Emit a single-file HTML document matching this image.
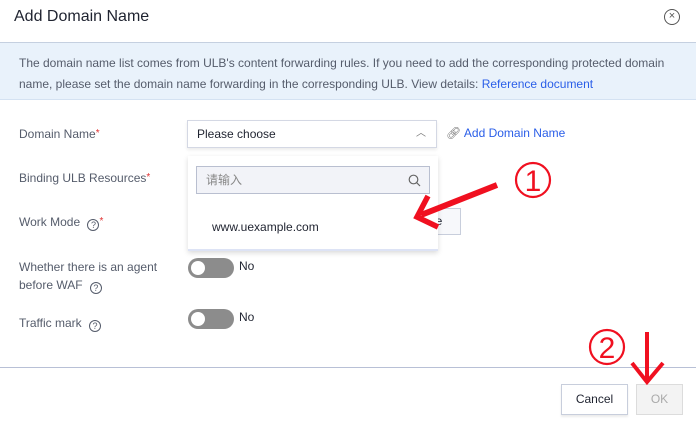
<!DOCTYPE html>
<html><head><meta charset="utf-8"><style>
*{box-sizing:border-box;margin:0;padding:0}
body{width:696px;height:430px;background:#fff;font-family:"Liberation Sans","Noto Sans CJK SC",sans-serif;position:relative;overflow:hidden;color:#333}
.a{position:absolute}
.lbl{position:absolute;left:19px;font-size:12px;color:#555c6b;line-height:18px}
.req{color:#e03030;font-size:10px;vertical-align:top}
.q{display:inline-block;width:12px;height:12px;border:1px solid #555c6b;border-radius:50%;font-size:9px;line-height:10px;text-align:center;vertical-align:-2px;margin-left:4px}
.tog{position:absolute;width:46px;height:20px;border-radius:10px;background:#8c8c8c}
.tog:after{content:"";position:absolute;left:3px;top:3px;width:14px;height:14px;border-radius:50%;background:#fff}
</style></head><body>
<div class="a" style="left:14px;top:8px;font-size:16px;color:#1f2330">Add Domain Name</div>
<div class="a" style="left:664px;top:9px;width:16px;height:16px;border:1.5px solid #555;border-radius:50%;font-size:11px;line-height:12px;text-align:center;color:#555">×</div>
<div class="a" style="left:0;top:42px;width:696px;height:58px;background:#e9f2fb;border-top:1px solid #c5d0e0;border-bottom:1px solid #d4e2f2"></div>
<div class="a" style="left:19px;top:53px;width:670px;font-size:12px;line-height:21px;color:#555c6b">The domain name list comes from ULB's content forwarding rules. If you need to add the corresponding protected domain name, please set the domain name forwarding in the corresponding ULB. View details: <span style="color:#2a5ee8">Reference document</span></div>
<div class="lbl" style="top:125px">Domain Name<span class="req">*</span></div>
<div class="a" style="left:187px;top:120px;width:250px;height:28px;border:1px solid #d4d8e4;box-shadow:0 2px 3px rgba(0,0,0,.08);font-size:12px;line-height:26px;padding-left:9px;color:#1f2330">Please choose<span style="position:absolute;right:10px;top:0;color:#777;font-size:10px">︿</span></div>
<div class="a" style="left:446px;top:126px;font-size:12px;color:#2a5ee8"><span style="color:#777">🔗︎</span> Add Domain Name</div>
<div class="lbl" style="top:169px">Binding ULB Resources<span class="req">*</span></div>
<div class="lbl" style="top:213px">Work Mode <span class="q">?</span><span class="req">*</span></div>
<div class="lbl" style="top:258px;width:160px">Whether there is an agent before WAF <span class="q">?</span></div>
<div class="lbl" style="top:314px">Traffic mark <span class="q">?</span></div>
<div class="a" style="left:420px;top:208px;width:41px;height:27px;border:1px solid #c8cedc;background:#f7f8fb;font-size:12px;line-height:25px;padding-left:8px;color:#1f2330">de</div>
<div class="a" style="left:188px;top:156px;width:250px;height:95px;background:#fff;box-shadow:0 2px 5px rgba(0,0,0,.15);border-bottom:2px solid #dde3f5"></div>
<div class="a" style="left:196px;top:166px;width:234px;height:28px;border:1px solid #b9bfd0;background:#f2f3f8;font-size:12px;line-height:26px;padding-left:9px;color:#888">请输入
<svg class="a" style="right:8px;top:7px" width="13" height="13" viewBox="0 0 13 13"><circle cx="5.5" cy="5.5" r="4.3" fill="none" stroke="#666" stroke-width="1.2"/><path d="M8.7 8.7L12 12" stroke="#666" stroke-width="1.2"/></svg></div>
<div class="a" style="left:212px;top:220px;font-size:12px;color:#1f2330">www.uexample.com</div>
<div class="tog" style="left:188px;top:258px"></div><div class="a" style="left:239px;top:259px;font-size:12px;color:#1f2330">No</div>
<div class="tog" style="left:188px;top:309px"></div><div class="a" style="left:239px;top:310px;font-size:12px;color:#1f2330">No</div>
<div class="a" style="left:0;top:367px;width:696px;height:1px;background:#b8c0d6"></div>
<div class="a" style="left:561px;top:384px;width:67px;height:31px;border:1px solid #c8cedc;box-shadow:0 2px 2px rgba(0,0,0,.08);font-size:12px;line-height:29px;text-align:center;color:#1f2330">Cancel</div>
<div class="a" style="left:636px;top:384px;width:47px;height:31px;border:1px solid #dcdcdc;background:#f3f3f3;font-size:12px;line-height:29px;text-align:center;color:#aaa">OK</div>
<svg class="a" style="left:0;top:0" width="696" height="430">
<path d="M497 185L421 215" stroke="#f01020" stroke-width="6"/>
<path d="M428 196L417 217L438 227" fill="none" stroke="#f01020" stroke-width="5.5"/>
<path d="M647 332L647 379" stroke="#f01020" stroke-width="4"/>
<path d="M632 363L647 382L663 363" fill="none" stroke="#f01020" stroke-width="4"/>
<circle cx="533" cy="180" r="17" fill="none" stroke="#f01020" stroke-width="2.2"/>
<text x="533" y="191" font-size="30" text-anchor="middle" fill="#f01020" font-family="Liberation Sans,sans-serif">1</text>
<circle cx="607" cy="347" r="17" fill="none" stroke="#f01020" stroke-width="2.2"/>
<text x="607" y="358" font-size="30" text-anchor="middle" fill="#f01020" font-family="Liberation Sans,sans-serif">2</text>
</svg>
</body></html>
